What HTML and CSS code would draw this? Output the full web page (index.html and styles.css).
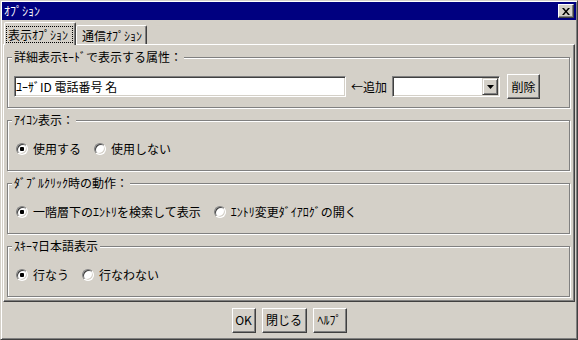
FILE: index.html
```html
<!DOCTYPE html>
<html lang="ja">
<head>
<meta charset="utf-8">
<title>ｵﾌﾟｼｮﾝ</title>
<link rel="stylesheet" href="styles.css">
</head>
<body>
<div class="window">
  <div class="titlebar">
    <span class="title">ｵﾌﾟｼｮﾝ</span>
    <button class="close" type="button" aria-label="閉じる">
      <svg width="8" height="7" viewBox="0 0 8 7"><path d="M0 0h2l2 2.4L6 0h2L5 3.5 8 7H6L4 4.6 2 7H0l3-3.5z" fill="#000"/></svg>
    </button>
  </div>
  <div class="tabs">
    <div class="tab tab-active"><span class="focus">表示ｵﾌﾟｼｮﾝ</span></div>
    <div class="tab tab-other">通信ｵﾌﾟｼｮﾝ</div>
  </div>
  <div class="panel">
    <fieldset class="group group-attrs">
      <legend class="legend">詳細表示ﾓｰﾄﾞで表示する属性：</legend>
      <div class="attr-row">
        <input class="text-input" type="text" value="ﾕｰｻﾞID 電話番号 名">
        <span class="add-label">←追加</span>
        <div class="combo">
          <div class="combo-btn">
            <svg width="7" height="4" viewBox="0 0 7 4"><path d="M0 0h7L3.5 4z" fill="#000"/></svg>
          </div>
        </div>
        <button class="btn btn-del" type="button">削除</button>
      </div>
    </fieldset>
    <fieldset class="group">
      <legend class="legend">ｱｲｺﾝ表示：</legend>
      <div class="radios">
        <label class="opt"><input class="radio" type="radio" name="icon" checked>使用する</label>
        <label class="opt"><input class="radio" type="radio" name="icon">使用しない</label>
      </div>
    </fieldset>
    <fieldset class="group">
      <legend class="legend">ﾀﾞﾌﾞﾙｸﾘｯｸ時の動作：</legend>
      <div class="radios">
        <label class="opt"><input class="radio" type="radio" name="dbl" checked>一階層下のｴﾝﾄﾘを検索して表示</label>
        <label class="opt"><input class="radio" type="radio" name="dbl">ｴﾝﾄﾘ変更ﾀﾞｲｱﾛｸﾞの開く</label>
      </div>
    </fieldset>
    <fieldset class="group">
      <legend class="legend">ｽｷｰﾏ日本語表示</legend>
      <div class="radios">
        <label class="opt"><input class="radio" type="radio" name="schema" checked>行なう</label>
        <label class="opt"><input class="radio" type="radio" name="schema">行なわない</label>
      </div>
    </fieldset>
  </div>
  <div class="footer">
    <button class="btn btn-ok" type="button">OK</button>
    <button class="btn btn-close" type="button">閉じる</button>
    <button class="btn btn-help" type="button">ﾍﾙﾌﾟ</button>
  </div>
</div>
</body>
</html>
```
FILE: styles.css
```css
* { box-sizing: border-box; }
html, body { margin: 0; padding: 0; }
body {
  background: #d4d0c8;
  font-family: "Noto Sans CJK JP", "Noto Sans", sans-serif;
  font-size: 12px;
  line-height: 14px;
  color: #000;
}
.window {
  width: 578px;
  height: 340px;
  border: 1px solid;
  border-color: #d4d0c8 #404040 #404040 #d4d0c8;
  box-shadow: inset 1px 1px #fff, inset -1px -1px #808080;
  padding: 1px;
  background: #d4d0c8;
  display: flex;
  flex-direction: column;
}
.titlebar {
  height: 18px;
  flex: none;
  background: #000080;
  color: #fff;
  display: flex;
  align-items: center;
  justify-content: space-between;
  padding: 0 2px 0 2px;
}
.title { line-height: 14px; }
.close {
  width: 16px;
  height: 14px;
  padding: 0;
  margin: 0;
  background: #d4d0c8;
  border: 1px solid;
  border-color: #fff #404040 #404040 #fff;
  box-shadow: inset -1px -1px #808080;
  display: flex;
  align-items: center;
  justify-content: center;
}
.close svg { display: block; }
.tabs {
  height: 24px;
  flex: none;
  padding: 2px 0 0 2px;
  display: flex;
  align-items: flex-end;
}
.tab {
  background: #d4d0c8;
  border: 1px solid;
  border-bottom: none;
  border-color: #fff #404040 transparent #fff;
  box-shadow: inset -1px 0 #808080;
  border-radius: 2px 2px 0 0;
  white-space: nowrap;
}
.tab-active {
  width: 72px;
  height: 23px;
  padding: 3px 2px 0 1px;
  margin-bottom: -1px;
  position: relative;
  z-index: 1;
}
.focus {
  display: block;
  border: 1px dotted #000;
  padding: 0 1px;
  line-height: 15px;
}
.tab-other {
  width: 71px;
  height: 19px;
  padding: 2px 0 0 5px;
  line-height: 15px;
}
.panel {
  flex: none;
  margin: 0 1px;
  border: 1px solid;
  border-color: #fff #404040 #404040 #fff;
  box-shadow: inset -1px -1px #808080;
  padding: 5px 4px 4px 3px;
  display: flex;
  flex-direction: column;
  gap: 5px;
}
.group {
  margin: 0;
  min-width: 0;
  height: 58px;
  border: 1px solid #808080;
  box-shadow: inset 1px 1px #fff, 1px 1px #fff;
  padding: 15px 0 0 6px;
}
.group-attrs { padding-top: 10px; }
.legend {
  padding: 0 2px;
  margin-left: -2px;
  line-height: 14px;
  background: #d4d0c8;
}
.attr-row {
  display: flex;
  align-items: center;
}
.text-input {
  width: 332px;
  height: 21px;
  margin: 0 5px 0 0;
  padding: 0 0 0 1px;
  border: 1px solid;
  border-color: #808080 #fff #fff #808080;
  box-shadow: inset 1px 1px #404040, inset -1px -1px #d4d0c8;
  background: #fff;
  font: inherit;
  color: #000;
  outline: none;
}
.add-label { margin-right: 5px; white-space: nowrap; }
.combo {
  width: 108px;
  height: 21px;
  margin-right: 7px;
  background: #fff;
  border: 1px solid;
  border-color: #808080 #fff #fff #808080;
  box-shadow: inset 1px 1px #404040, inset -1px -1px #d4d0c8;
  padding: 1px;
  display: flex;
  justify-content: flex-end;
}
.combo-btn {
  width: 16px;
  height: 17px;
  background: #d4d0c8;
  border: 1px solid;
  border-color: #d4d0c8 #404040 #404040 #d4d0c8;
  box-shadow: inset 1px 1px #fff, inset -1px -1px #808080;
  display: flex;
  align-items: center;
  justify-content: center;
}
.combo-btn svg { display: block; }
.btn {
  height: 25px;
  padding: 0;
  margin: 0;
  background: #d4d0c8;
  border: 1px solid;
  border-color: #fff #404040 #404040 #fff;
  box-shadow: inset -1px -1px #808080;
  font: inherit;
  color: #000;
  line-height: 14px;
  display: flex;
  align-items: center;
  justify-content: center;
  white-space: nowrap;
}
.btn-del { width: 33px; }
.btn-ok { width: 24px; }
.btn-close { width: 45px; }
.btn-help { width: 34px; }
.radios {
  display: flex;
  gap: 13px;
  padding-left: 2px;
}
.opt {
  display: flex;
  align-items: center;
  gap: 5px;
  white-space: nowrap;
  line-height: 14px;
}
.radio {
  appearance: none;
  -webkit-appearance: none;
  width: 12px;
  height: 12px;
  margin: 0;
  border-radius: 50%;
  border: 1px solid;
  border-color: #808080 #fff #fff #808080;
  box-shadow: inset 1px 1px #404040, inset -1px -1px #d4d0c8;
  background: #fff;
}
.radio:checked {
  background: radial-gradient(circle, #000 0 2px, #fff 2.5px);
}
.footer {
  flex: 1;
  display: flex;
  align-items: center;
  justify-content: center;
  gap: 6px;
}
```
